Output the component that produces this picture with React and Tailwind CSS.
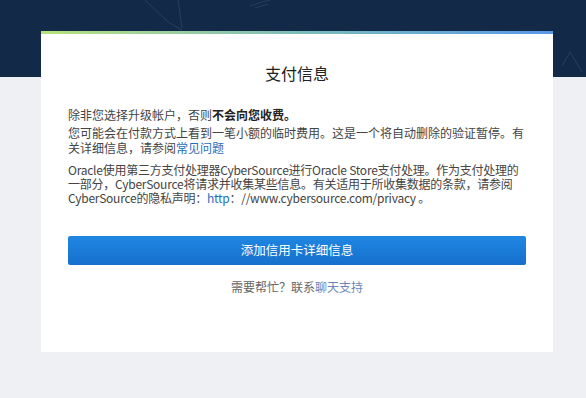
import React from "react";

const FONT = {
  fontFamily: '"Noto Sans CJK SC", "Noto Sans", sans-serif',
};

function HeaderLines() {
  return (
    <svg
      className="absolute inset-0 h-full w-full"
      viewBox="0 0 586 77"
      preserveAspectRatio="none"
    >
      <g stroke="#5d7898" strokeWidth="0.8" fill="none" opacity="0.35">
        <path d="M145 0 L168 22 L182 30" />
        <path d="M178 0 L182 28" />
        <path d="M250 6 L262 2 L270 0" />
        <path d="M255 8 L268 4" />
        <path d="M562 66 L570 52 L582 72" />
      </g>
    </svg>
  );
}

export default function App() {
  return (
    <div
      className="relative min-h-[398px] w-full bg-[#eef0f3] text-[12px] text-[#333]"
      style={FONT}
    >
      <div className="absolute inset-x-0 top-0 h-[77px] overflow-hidden bg-[#122a48]">
        <HeaderLines />
      </div>

      <div className="relative pt-[31px] pl-[41px]">
        <div className="h-[321px] w-[512px] bg-white">
          <div className="h-[3px] bg-gradient-to-r from-[#b8e07a] via-[#7cbcb8] to-[#5a98e8]" />
          <div className="px-[27px]">
            <h1 className="mt-[29px] text-center text-[16px] leading-[20px] text-[#222]">
              支付信息
            </h1>

            <p className="mt-[24px] leading-[15px] text-[#444]">
              除非您选择升级帐户，否则<span className="font-bold text-[#222]">不会向您收费。</span>
            </p>

            <p className="mt-[3px] leading-[15px] text-[#444]">
              您可能会在付款方式上看到一笔小额的临时费用。这是一个将自动删除的验证暂停。有关详细信息，请参阅
              <span className="text-[#1f6fbf]">常见问题</span>
            </p>

            <p className="mt-[8px] leading-[14px] tracking-[-0.25px] text-[#444]">
              Oracle使用第三方支付处理器CyberSource进行Oracle Store支付处理。作为支付处理的一部分，CyberSource将请求并收集某些信息。有关适用于所收集数据的条款，请参阅CyberSource的隐私声明：
              <span className="text-[#1f6fbf]">http</span>：//www.cybersource.com/privacy 。
            </p>

            <button className="mt-[31px] flex h-[29px] w-full items-center justify-center rounded-[2px] bg-gradient-to-b from-[#1f87e3] to-[#1670cc] text-[12.5px] text-white">
              添加信用卡详细信息
            </button>

            <p className="mt-[14px] text-center leading-[15px] text-[#666]">
              需要帮忙？联系<span className="text-[#6a86b6]">聊天支持</span>
            </p>
          </div>
        </div>
      </div>
    </div>
  );
}
